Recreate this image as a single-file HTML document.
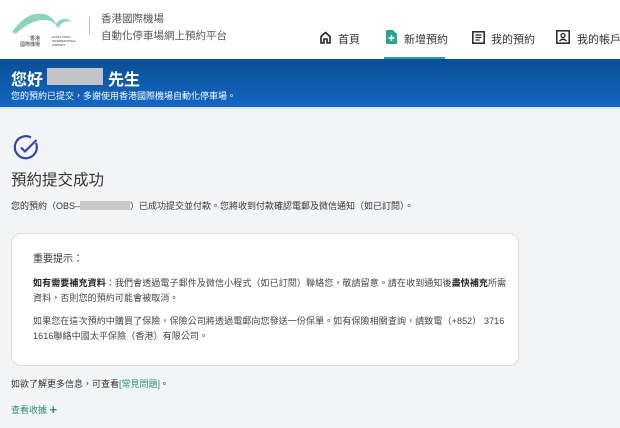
<!DOCTYPE html>
<html><head><meta charset="utf-8"><style>
*{margin:0;padding:0;box-sizing:border-box}
body{width:620px;height:428px;overflow:hidden;background:#f3f4f6;font-family:"Liberation Sans","Noto Sans CJK TC",sans-serif;color:#333;position:relative}
.hdr{position:absolute;left:0;top:0;width:620px;height:59px;background:#fff}
.ban{position:absolute;left:0;top:59px;width:620px;height:48px;background:linear-gradient(#0a4f96,#1466c2);color:#fff}
.line{position:absolute;left:0;top:107px;width:620px;height:2px;background:#cfe6ee}
.a{position:absolute;white-space:nowrap}
.nav{font-size:11px;color:#333;top:31px}
</style></head><body>
<div class="hdr">
<svg class="a" style="left:10px;top:8px" width="80" height="40" viewBox="0 0 80 40">
<path d="M2 24 C12 10 22 4 34 6 C40 7 44 12 46 16 C50 10 56 9 62 14 C56 12 52 14 48 20 C44 14 40 12 34 12 C24 12 14 18 6 26 Z" fill="#8fd3bd"/>
<text x="20" y="32" font-size="5" fill="#333" font-family="Noto Sans CJK TC">香港</text>
<text x="10" y="38" font-size="5" fill="#333" font-family="Noto Sans CJK TC">國際機場</text>
<text x="42" y="30" font-size="3" fill="#333">HONG KONG</text>
<text x="42" y="34" font-size="3" fill="#333">INTERNATIONAL</text>
<text x="42" y="38" font-size="3" fill="#333">AIRPORT</text>
</svg>
<div class="a" style="left:89px;top:17px;width:1px;height:18px;background:#bbb"></div>
<div class="a" style="left:101px;top:11px;font-size:10.5px;color:#555">香港國際機場</div>
<div class="a" style="left:101px;top:28px;font-size:10.5px;color:#555">自動化停車場網上預約平台</div>
<svg class="a" style="left:319px;top:31px" width="13" height="13" viewBox="0 0 13 13"><path d="M2 12V5.5L6.5 1.5L11 5.5V12H8V8H5V12Z" fill="none" stroke="#222" stroke-width="1.6"/></svg>
<div class="a nav" style="left:338px">首頁</div>
<svg class="a" style="left:386px;top:30px" width="11" height="14" viewBox="0 0 11 14"><path d="M0 1Q0 0 1 0H7L11 4V13Q11 14 10 14H1Q0 14 0 13Z" fill="#2aa38b"/><path d="M5.5 5V11M2.5 8H8.5" stroke="#fff" stroke-width="1.4"/></svg>
<div class="a nav" style="left:404px;color:#333">新增預約</div>
<div class="a" style="left:384px;top:57px;width:61px;height:3px;background:#2aa38b"></div>
<svg class="a" style="left:472px;top:31px" width="13" height="13" viewBox="0 0 13 13"><rect x="0.8" y="0.8" width="11.4" height="11.4" fill="none" stroke="#222" stroke-width="1.5"/><path d="M3.5 4H9.5M3.5 6.5H9.5M3.5 9H7.5" stroke="#222" stroke-width="1.3"/></svg>
<div class="a nav" style="left:491px">我的預約</div>
<svg class="a" style="left:556px;top:30px" width="14" height="14" viewBox="0 0 14 14"><rect x="0.8" y="0.8" width="12.4" height="12.4" fill="none" stroke="#222" stroke-width="1.5"/><circle cx="7" cy="5.5" r="2" fill="none" stroke="#222" stroke-width="1.3"/><path d="M3.5 11Q7 7.5 10.5 11" fill="none" stroke="#222" stroke-width="1.3"/></svg>
<div class="a nav" style="left:577px">我的帳戶</div>
</div>
<div class="ban">
<div class="a" style="left:11px;top:7px;font-size:16px;font-weight:bold">您好</div>
<div class="a" style="left:47px;top:9px;width:56px;height:17px;background:#c2c4c8"></div>
<div class="a" style="left:108px;top:7px;font-size:16px;font-weight:bold">先生</div>
<div class="a" style="left:11px;top:30px;font-size:9px">您的預約已提交，多謝使用香港國際機場自動化停車場。</div>
</div>
<div class="line"></div>
<svg class="a" style="left:13px;top:134px" width="27" height="27" viewBox="0 0 27 27"><path d="M23 9A11 11 0 1 1 18 3.5" fill="none" stroke="#2f4a9e" stroke-width="2.2"/><path d="M8 13.5L12 17.5L23.5 6" fill="none" stroke="#2f4a9e" stroke-width="2.2"/></svg>
<div class="a" style="left:11px;top:168px;font-size:15.5px;color:#333">預約提交成功</div>
<div class="a" style="left:11px;top:199px;font-size:9px;color:#333">您的預約（OBS–<span style="display:inline-block;width:50px;height:9px;background:#c8c8c8;vertical-align:-1px"></span>）已成功提交並付款。您將收到付款確認電郵及微信通知（如已訂閱）。</div>
<div class="a" style="left:11px;top:233px;width:508px;height:133px;background:#fff;border:1px solid #dcdcdc;border-radius:10px"></div>
<div class="a" style="left:33px;top:250px;font-size:10px;color:#333">重要提示：</div>
<div class="a" style="left:33px;top:276px;font-size:9px;letter-spacing:0.1px;line-height:15px;color:#444"><b style="color:#222">如有需要補充資料</b>：我們會透過電子郵件及微信小程式（如已訂閱）聯絡您，敬請留意。請在收到通知後<b style="color:#222">盡快補充</b>所需<br>資料，否則您的預約可能會被取消。</div>
<div class="a" style="left:33px;top:314px;font-size:9px;letter-spacing:0.1px;line-height:15px;color:#444">如果您在這次預約中購買了保險，保險公司將透過電郵向您發送一份保單。如有保險相關查詢，請致電（+852） 3716<br>1616聯絡中國太平保險（香港）有限公司。</div>
<div class="a" style="left:11px;top:377px;font-size:9px;color:#333">如欲了解更多信息，可查看<span style="color:#2a8f80">[常見問題]</span>。</div>
<div class="a" style="left:11px;top:402px;font-size:9px;color:#2a8f80">查看收據 <b style="font-size:13px;vertical-align:-1px">+</b></div>
</body></html>
